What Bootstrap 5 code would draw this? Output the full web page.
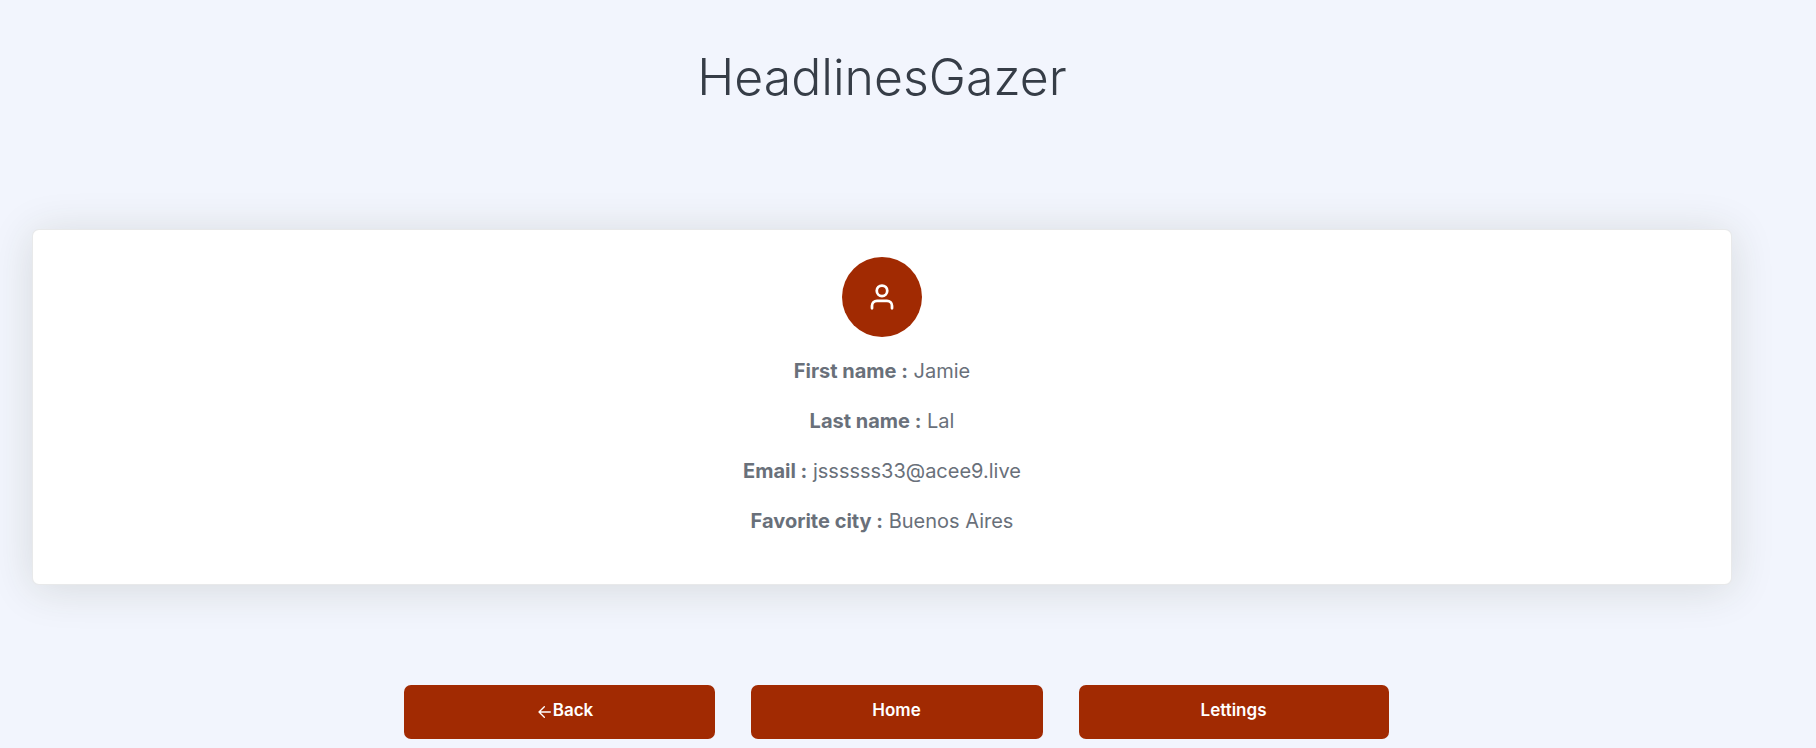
<!DOCTYPE html>
<html lang="en">
<head>
<meta charset="utf-8">
<meta name="viewport" content="width=device-width, initial-scale=1">
<title>Profile</title>
<link href="https://cdn.jsdelivr.net/npm/bootstrap@5.3.0/dist/css/bootstrap.min.css" rel="stylesheet">
<style>
  body { background: #f2f5fd; color: #69707a; font-family: Inter, "Liberation Sans", sans-serif; }
  .profile-page { padding: 44px 84px 8px 32px; }
  .page-title { color: #363d47; font-size: 50px; font-weight: 300; line-height: 66px; margin-bottom: 119px; }
  .profile-card { border: 1px solid rgba(33, 40, 50, .1); border-radius: 7px; padding: 27px 16px 28px; box-shadow: 0 4px 44px rgba(50, 55, 20, .14); }
  .avatar { width: 80px; height: 80px; background: #a12a02; margin-bottom: 19px; }
  .profile-line { font-size: 20px; line-height: 30px; margin-bottom: 20px; }
  .profile-line strong { font-weight: 700; }
  .actions { gap: 36px; margin-top: 100px; padding-left: 28px; }
  .btn-rust { --bs-btn-color: #fff; --bs-btn-bg: #a12a02; --bs-btn-hover-color: #fff; --bs-btn-hover-bg: #892402; --bs-btn-active-color: #fff; --bs-btn-active-bg: #7a2002;
    width: 310px; height: 54px; border: 0; border-radius: 7px; padding: 0 0 2px; font-size: 17px; font-weight: 600; }
  .btn-home { width: 292px; }
  .btn-back { width: 311px; padding-left: 12px; }
  .btn-back svg { margin-top: 2px; }
</style>
</head>
<body>
<main class="profile-page">
  <h1 class="page-title text-center">HeadlinesGazer</h1>
  <section class="card profile-card text-center align-items-center">
    <div class="avatar rounded-circle d-flex align-items-center justify-content-center">
      <svg width="30" height="30" viewBox="0 0 24 24" fill="none" stroke="#fff" stroke-width="2.2" stroke-linecap="round" stroke-linejoin="round" aria-hidden="true"><path d="M20 21v-2a4 4 0 0 0-4-4H8a4 4 0 0 0-4 4v2"/><circle cx="12" cy="7" r="4.2"/></svg>
    </div>
    <p class="profile-line"><strong>First name :</strong> Jamie</p>
    <p class="profile-line"><strong>Last name :</strong> Lal</p>
    <p class="profile-line"><strong>Email :</strong> jssssss33@acee9.live</p>
    <p class="profile-line"><strong>Favorite city :</strong> Buenos Aires</p>
  </section>
  <nav class="actions d-flex flex-wrap justify-content-center" aria-label="Pages">
    <a href="#" class="btn btn-rust btn-back d-flex align-items-center justify-content-center">
      <svg width="16" height="16" viewBox="0 0 24 24" fill="none" stroke="#fff" stroke-width="2" stroke-linecap="round" stroke-linejoin="round" aria-hidden="true"><path d="M20 12H3M11 20l-8-8 8-8"/></svg>Back</a>
    <a href="#" class="btn btn-rust btn-home d-flex align-items-center justify-content-center">Home</a>
    <a href="#" class="btn btn-rust d-flex align-items-center justify-content-center">Lettings</a>
  </nav>
</main>
<script src="https://cdn.jsdelivr.net/npm/bootstrap@5.3.0/dist/js/bootstrap.bundle.min.js"></script>
</body>
</html>
